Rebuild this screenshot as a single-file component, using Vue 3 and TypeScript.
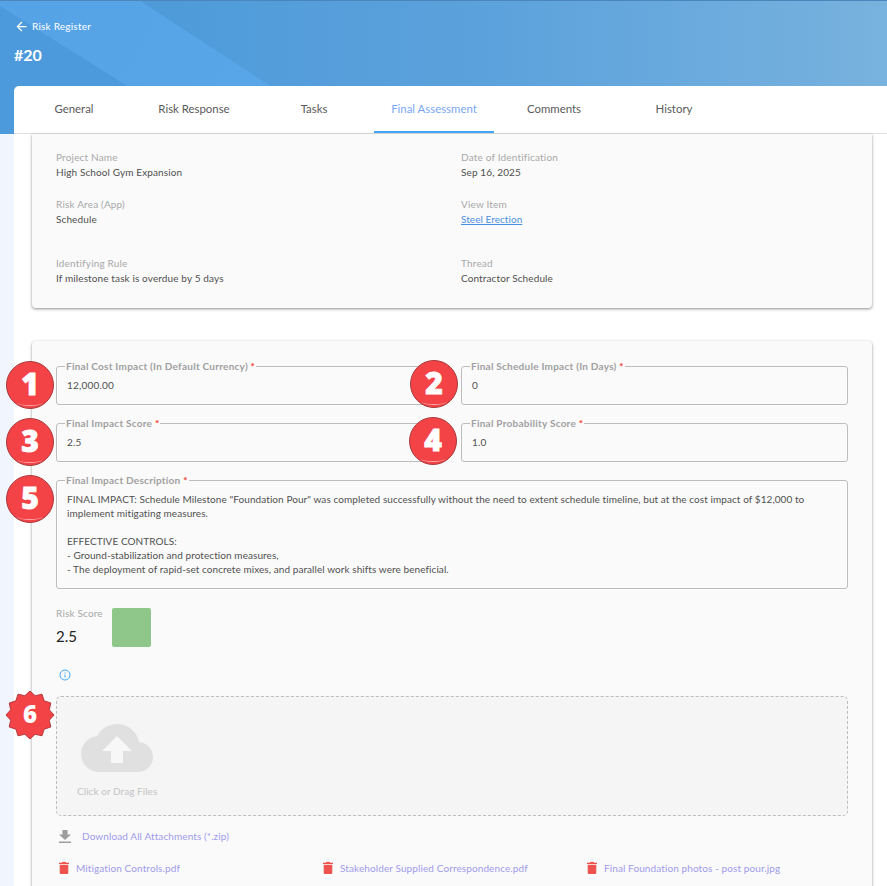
<template>
  <div class="page">
    <header class="hero">
      <a class="back">
        <svg width="15" height="15" viewBox="0 0 24 24"><path d="M20 11H7.83l5.59-5.59L12 4l-8 8 8 8 1.41-1.41L7.83 13H20z" fill="#fff" /></svg>
        Risk Register
      </a>
      <h1 class="title">#20</h1>
    </header>

    <main class="sheet">
      <nav class="tabs">
        <span v-for="tab in tabs" :key="tab" class="tab" :class="{ active: tab === 'Final Assessment' }">{{ tab }}</span>
      </nav>

      <div class="content">
        <section class="card info">
          <div v-for="item in info" :key="item.label" class="info-item">
            <div class="info-label">{{ item.label }}</div>
            <a v-if="item.link" class="info-link">{{ item.value }}</a>
            <div v-else class="info-value">{{ item.value }}</div>
          </div>
        </section>

        <section class="card assess">
          <div class="field-grid">
            <fieldset v-for="f in fields" :key="f.label" class="field" :class="{ wide: f.badge === 5 }">
              <legend>{{ f.label }} <b>*</b></legend>
              <div v-if="f.lines" class="field-text">
                <div v-for="(line, i) in f.lines" :key="i">{{ line }}</div>
              </div>
              <div v-else class="field-value">{{ f.value }}</div>
              <span class="badge" :class="'badge-' + f.badge">{{ f.badge }}</span>
            </fieldset>
          </div>

          <div class="score">
            <div>
              <div class="info-label">Risk Score</div>
              <div class="score-value">2.5</div>
            </div>
            <div class="swatch"></div>
          </div>

          <svg class="info-icon" width="12" height="12" viewBox="0 0 24 24">
            <circle cx="12" cy="12" r="10" fill="none" stroke="#42a5f5" stroke-width="2" />
            <path d="M11 11h2v6h-2zM11 7h2v2h-2z" fill="#42a5f5" />
          </svg>

          <div class="drop">
            <svg class="star" width="50" height="50" viewBox="0 0 50 50">
              <polygon :points="starPoints" fill="#f44346" stroke="#b5383c" stroke-width="1" stroke-linejoin="round" />
            </svg>
            <span class="star-num">6</span>
            <svg class="cloud" width="72" height="48" viewBox="0 0 24 16">
              <path d="M19.35 6.04A7.49 7.49 0 0 0 12 0C9.11 0 6.6 1.64 5.35 4.04A5.994 5.994 0 0 0 0 10c0 3.31 2.69 6 6 6h13c2.76 0 5-2.24 5-5 0-2.64-2.05-4.78-4.65-4.96z" fill="#e0e0e0" />
              <path d="M14 9v4h-4V9H7l5-5 5 5h-3z" fill="#f7f7f7" />
            </svg>
            <div class="drop-text">Click or Drag Files</div>
          </div>

          <div class="download">
            <svg width="12" height="13" viewBox="5 3 14 17" preserveAspectRatio="none"><path d="M19 9h-4V3H9v6H5l7 7 7-7zM5 18v2h14v-2H5z" fill="#9e9e9e" /></svg>
            <a>Download All Attachments (*.zip)</a>
          </div>

          <div class="files">
            <div v-for="file in files" :key="file" class="file">
              <svg width="10" height="12" viewBox="5 3 14 18" preserveAspectRatio="none"><path d="M6 19c0 1.1.9 2 2 2h8c1.1 0 2-.9 2-2V7H6v12zM19 4h-3.5l-1-1h-5l-1 1H5v2h14V4z" fill="#ef5350" /></svg>
              <a>{{ file }}</a>
            </div>
          </div>
        </section>
      </div>
    </main>
  </div>
</template>

<script setup lang="ts">
const tabs = ['General', 'Risk Response', 'Tasks', 'Final Assessment', 'Comments', 'History']

const info = [
  { label: 'Project Name', value: 'High School Gym Expansion' },
  { label: 'Date of Identification', value: 'Sep 16, 2025' },
  { label: 'Risk Area (App)', value: 'Schedule' },
  { label: 'View Item', value: 'Steel Erection', link: true },
  { label: 'Identifying Rule', value: 'If milestone task is overdue by 5 days' },
  { label: 'Thread', value: 'Contractor Schedule' }
]

const fields: { label: string; value?: string; lines?: string[]; badge: number }[] = [
  { label: 'Final Cost Impact (In Default Currency)', value: '12,000.00', badge: 1 },
  { label: 'Final Schedule Impact (In Days)', value: '0', badge: 2 },
  { label: 'Final Impact Score', value: '2.5', badge: 3 },
  { label: 'Final Probability Score', value: '1.0', badge: 4 },
  {
    label: 'Final Impact Description',
    badge: 5,
    lines: [
      'FINAL IMPACT: Schedule Milestone "Foundation Pour" was completed successfully without the need to extent schedule timeline, but at the cost impact of $12,000 to implement mitigating measures.',
      '\u00a0',
      'EFFECTIVE CONTROLS:',
      '- Ground-stabilization and protection measures,',
      '- The deployment of rapid-set concrete mixes, and parallel work shifts were beneficial.'
    ]
  }
]

const files = ['Mitigation Controls.pdf', 'Stakeholder Supplied Correspondence.pdf', 'Final Foundation photos - post pour.jpg']

// 12 pointed seal behind the number 6
const starPoints = Array.from({ length: 24 }, (_, i) => {
  const r = i % 2 === 0 ? 24 : 20
  const a = (i * Math.PI) / 12
  return `${(25 + r * Math.cos(a)).toFixed(2)},${(25 + r * Math.sin(a)).toFixed(2)}`
}).join(' ')
</script>

<style>
html, body { margin: 0; background: #f1f6fe; }
</style>

<style scoped>
.page {
  height: 886px;
  overflow: hidden;
  font-family: "Lato", "Noto Sans", sans-serif;
  background: #f1f6fe;
}

.hero {
  position: relative;
  height: 134px;
  box-sizing: border-box;
  padding: 18px 16px 0;
  border-top: 1px solid #4a86bb;
  color: #fff;
  background: linear-gradient(90deg, #4f9bda 0%, #4f9bda 20%, #5ca2dc 56%, #78b2de 100%);
}

/* diagonal bands of the banner */
.hero::before {
  content: "";
  position: absolute;
  inset: 0;
  background: linear-gradient(120deg, #55a3e6, #5eaae9);
  clip-path: polygon(0 0, 140px 0, 272px 86px, 125px 86px, 0 5px);
}

.hero::after {
  content: "";
  position: absolute;
  inset: 0;
  background: #4c9adc;
  clip-path: polygon(0 5px, 205px 134px, 0 134px);
}

.back {
  position: relative;
  z-index: 1;
  display: flex;
  align-items: center;
  gap: 3px;
  margin-left: -2px;
  font-size: 10px;
  line-height: 15px;
  letter-spacing: 0.22px;
}

.title {
  position: relative;
  z-index: 1;
  margin: 11px 0 0 -2px;
  font-size: 16px;
  line-height: 20px;
  font-weight: 700;
}

.sheet {
  margin: -48px 0 0 14px;
  background: #fff;
  border-radius: 5px 0 0 0;
  position: relative;
}

.tabs {
  display: flex;
  height: 47px;
  border-bottom: 1px solid #e0e0e0;
}

.tab {
  width: 120px;
  text-align: center;
  font-size: 11.4px;
  line-height: 46px;
  color: #5a5a5a;
}

.tab.active {
  color: #7aa7f5;
  box-shadow: inset 0 -2px 0 #42a5f5;
}

.content {
  padding: 0 15px 0 18px;
}

.card {
  background: #fafafa;
  border-radius: 0 0 4px 4px;
  box-shadow: 0 1px 3px rgba(0, 0, 0, 0.45);
  box-sizing: border-box;
}

.info {
  height: 174px;
  padding: 16px 24px 0;
  display: grid;
  grid-template-columns: 405px 1fr;
  grid-template-rows: 47px 59px 40px;
}

.info-label {
  font-size: 10px;
  line-height: 14px;
  color: #a8a8a8;
  letter-spacing: 0.18px;
}

.info-value, .info-link {
  display: block;
  margin-top: 1px;
  font-size: 10px;
  line-height: 15px;
  color: #505050;
  letter-spacing: 0.12px;
}

.info-link {
  color: #4a90e2;
  letter-spacing: 0.05px;
  text-decoration: underline;
}

.assess {
  margin-top: 33px;
  border-radius: 4px 4px 0 0;
  padding: 21px 24px 0;
  height: 560px;
}

.field-grid {
  display: grid;
  grid-template-columns: 388px 387px;
  column-gap: 17px;
  row-gap: 14px;
}

.field {
  position: relative;
  margin: 0;
  padding: 0 10px;
  min-width: 0;
  height: 43px;
  box-sizing: border-box;
  border: 1px solid #bdbdbd;
  border-radius: 3px;
}

.field.wide {
  grid-column: 1 / -1;
  height: 113px;
}

legend {
  margin-left: -2px;
  padding: 0 1px;
  font-size: 10px;
  line-height: 8px;
  font-weight: 700;
  color: #a0a0a0;
  letter-spacing: 0.25px;
}

legend b {
  color: #f44336;
}

.field-value {
  font-size: 10px;
  line-height: 14px;
  margin-top: 8px;
  color: #505050;
  letter-spacing: 0.2px;
}

.field-text {
  font-size: 10px;
  line-height: 14px;
  margin-top: 8px;
  color: #505050;
  letter-spacing: 0.07px;
}

.badge {
  position: absolute;
  left: -51px;
  top: -9px;
  width: 46px;
  height: 46px;
  border-radius: 50%;
  background: #f44346;
  border: 1px solid #a93a3d;
  color: #fff;
  font-family: "Open Sans", sans-serif;
  font-size: 30px;
  font-weight: 800;
  line-height: 44px;
  text-align: center;
  overflow: hidden;
  -webkit-text-stroke: 0.8px #fff;
}

.badge-2 { margin: -1px 0 0 -1px; }
.badge-4 { margin: -1px 0 0 -2px; }

.badge::after {
  content: "";
  position: absolute;
  left: 11px;
  right: 11px;
  bottom: 2px;
  height: 5px;
  border-radius: 0 0 50% 50%;
  border-bottom: 1px solid #f7a6a8;
}

.score {
  display: flex;
  gap: 9px;
  margin-top: 17px;
}

.score-value {
  margin-top: 6px;
  font-size: 15px;
  line-height: 20px;
  color: #222;
}

.swatch {
  width: 39px;
  height: 39px;
  margin-top: 2px;
  border-radius: 2px;
  background: #8fc78a;
}

.info-icon {
  display: block;
  margin: 22px 0 0 3px;
}

.drop {
  position: relative;
  margin-top: 15px;
  width: 792px;
  height: 120px;
  box-sizing: border-box;
  background: #f5f5f5;
  border: 1px dashed #bdbdbd;
  border-radius: 5px;
  padding: 27px 0 0 24px;
}

.cloud {
  display: block;
}

.star {
  position: absolute;
  left: -52px;
  top: -7px;
}

.star-num {
  position: absolute;
  left: -52px;
  top: -8px;
  width: 50px;
  line-height: 50px;
  text-align: center;
  color: #fff;
  font-family: "Open Sans", sans-serif;
  font-size: 24px;
  font-weight: 800;
}

.drop-text {
  margin: 12px 0 0 -4px;
  font-size: 10px;
  line-height: 14px;
  color: #c4c4c4;
  letter-spacing: 0.05px;
}

.download {
  display: flex;
  align-items: center;
  gap: 11px;
  margin-top: 11px;
  height: 18px;
  padding-left: 3px;
}

.download a, .file a {
  font-size: 10px;
  line-height: 14px;
  color: #a09bea;
  letter-spacing: 0.1px;
}

.files {
  display: grid;
  grid-template-columns: 264px 264px 1fr;
  margin-top: 16px;
}

.file {
  display: flex;
  align-items: center;
  gap: 7px;
  padding-left: 3px;
}
</style>
